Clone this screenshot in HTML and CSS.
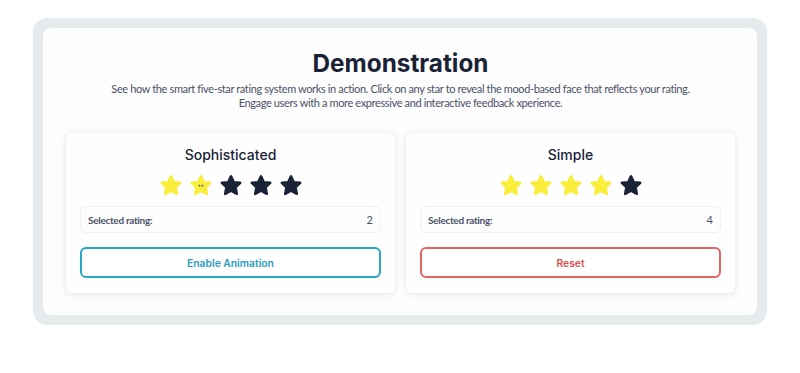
FILE: index.html
```html
<!DOCTYPE html>
<html lang="en">
<head>
<meta charset="utf-8">
<title>Demonstration</title>
<link rel="stylesheet" href="styles.css">
</head>
<body>
<svg width="0" height="0" class="defs" aria-hidden="true">
  <defs>
    <symbol id="star" viewBox="0 0 24 24">
      <path d="M12 2.4 L14.8 8.2 L21.2 8.9 L16.5 13.3 L17.8 19.8 L12 16.6 L6.2 19.8 L7.5 13.3 L2.8 8.9 L9.2 8.2 Z" stroke-width="2.6" stroke-linejoin="round"/>
    </symbol>
  </defs>
</svg>
<div class="frame">
  <div class="panel">
    <h1 class="title">Demonstration</h1>
    <p class="lead">See how the smart five-star rating system works in action. Click on any star to reveal the mood-based face that reflects your rating.<br>Engage users with a more expressive and interactive feedback xperience.</p>
    <div class="cards">
      <div class="card">
        <h2 class="card-title">Sophisticated</h2>
        <div class="stars">
          <svg class="star on"><use href="#star"/></svg>
          <svg class="star on face" viewBox="0 0 24 24"><use href="#star"/><circle cx="10.5" cy="11.6" r="0.9" class="eye"/><circle cx="13.5" cy="11.6" r="0.9" class="eye"/></svg>
          <svg class="star off"><use href="#star"/></svg>
          <svg class="star off"><use href="#star"/></svg>
          <svg class="star off"><use href="#star"/></svg>
        </div>
        <div class="rating"><span class="rating-label">Selected rating:</span><span class="rating-value">2</span></div>
        <button class="btn btn-teal">Enable Animation</button>
      </div>
      <div class="card">
        <h2 class="card-title">Simple</h2>
        <div class="stars">
          <svg class="star on"><use href="#star"/></svg>
          <svg class="star on"><use href="#star"/></svg>
          <svg class="star on"><use href="#star"/></svg>
          <svg class="star on"><use href="#star"/></svg>
          <svg class="star off"><use href="#star"/></svg>
        </div>
        <div class="rating"><span class="rating-label">Selected rating:</span><span class="rating-value">4</span></div>
        <button class="btn btn-red">Reset</button>
      </div>
    </div>
  </div>
</div>
</body>
</html>
```

FILE: styles.css
```css
* { box-sizing: border-box; }
html, body { margin: 0; padding: 0; background: #ffffff; }
body { font-family: Lato, "Liberation Sans", sans-serif; }
.defs { position: absolute; }

.frame {
  margin: 18px 0 0 33px;
  width: 734px;
  height: 307px;
  border: 10px solid #e6ebee;
  border-radius: 14px;
  background: #e6ebee;
}
.panel {
  height: 100%;
  background: #fdfdfe;
  border-radius: 8px;
  padding: 19px 22px 0 23px;
  display: flex;
  flex-direction: column;
  align-items: center;
}
.title {
  margin: 0;
  font-family: Inter, "Noto Sans", sans-serif;
  font-weight: 700;
  font-size: 24.3px;
  line-height: 32px;
  color: #1a2236;
}
.lead {
  margin: 3px 0 0;
  font-size: 11px;
  letter-spacing: -0.37px;
  line-height: 14px;
  color: #4b5268;
  text-align: center;
}
.cards {
  margin-top: 23px;
  width: 100%;
  display: grid;
  grid-template-columns: 1fr 1fr;
  gap: 11px;
}
.card {
  background: #fefefe;
  border-radius: 6px;
  box-shadow: 0 1px 6px rgba(30, 40, 70, 0.12);
  padding: 13px 14px 15px;
  display: flex;
  flex-direction: column;
  align-items: stretch;
}
.card-title {
  margin: 0;
  text-align: center;
  font-family: Inter, "Noto Sans", sans-serif;
  font-weight: 500;
  font-size: 14px;
  line-height: 18px;
  color: #1a2236;
}
.stars {
  margin-top: 10px;
  display: flex;
  justify-content: center;
  gap: 4px;
  height: 24px;
}
.star { width: 26px; height: 24px; }
.star.on { fill: #f9ef3a; stroke: #f9ef3a; }
.star.off { fill: #1a2238; stroke: #1a2238; }
.star .eye { fill: #3a4470; stroke: none; }
.rating {
  margin-top: 8px;
  height: 27px;
  border: 1px solid #eef0f3;
  border-radius: 6px;
  background: #fdfdfe;
  display: flex;
  align-items: center;
  justify-content: space-between;
  padding: 0 7px;
  font-size: 10px;
  color: #4b5268;
}
.rating-label { font-weight: 700; letter-spacing: -0.3px; }
.rating-value { font-size: 11px; }
.btn {
  margin-top: 14px;
  height: 31px;
  border-radius: 6px;
  background: #ffffff;
  font-family: Inter, "Noto Sans", sans-serif;
  font-weight: 600;
  font-size: 10.3px;
  cursor: pointer;
}
.btn-teal { border: 2px solid #2aa3c4; color: #2a9cbf; }
.btn-red { border: 2px solid #e46366; color: #d9534f; }
```
